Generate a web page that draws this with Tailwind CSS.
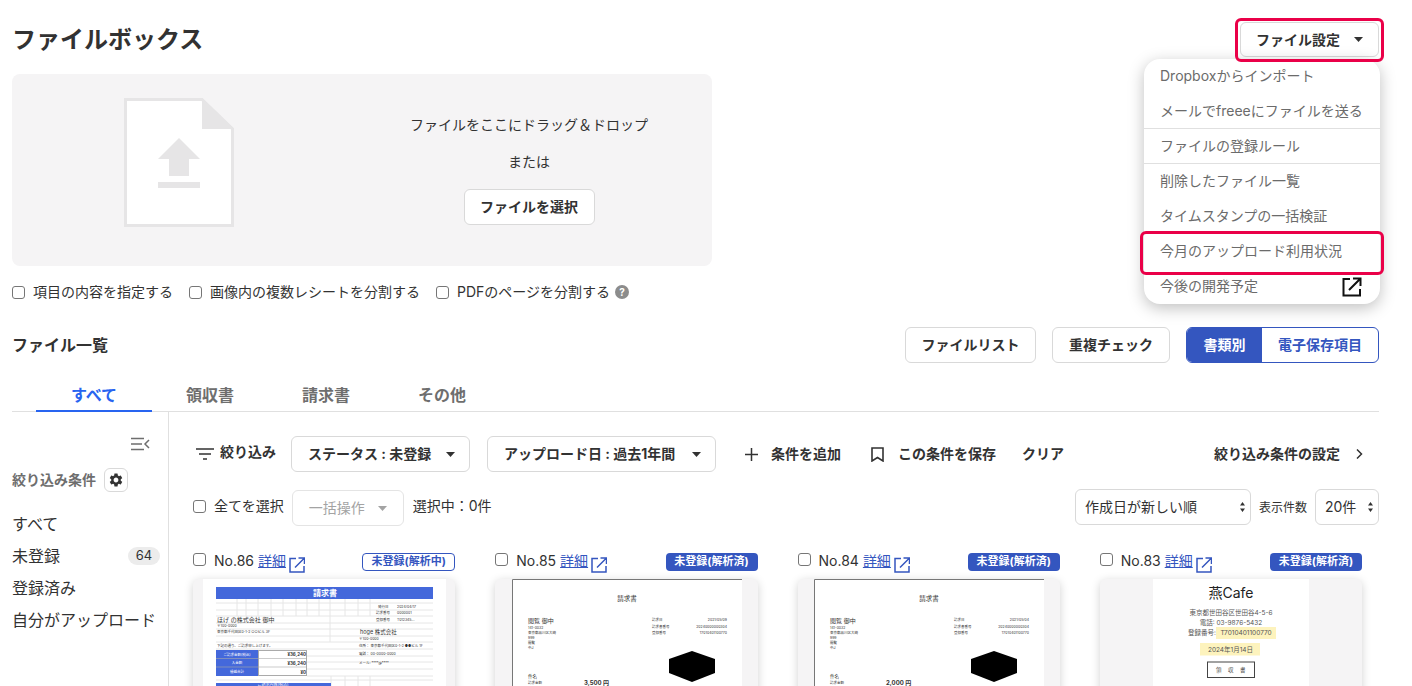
<!DOCTYPE html>
<html lang="ja">
<head>
    <meta charset="UTF-8">
    <title>ファイルボックス</title>
    <script src="https://cdn.jsdelivr.net/npm/@tailwindcss/browser@4"></script>
</head>
<body class="bg-white text-[#323232] font-[Inter,'Noto_Sans_CJK_JP',sans-serif] text-sm">
<div class="relative h-[686px] w-[1412px] overflow-hidden pl-3 pr-[33px] pt-[22px]">

    <!-- title -->
    <div class="flex h-[35px] items-center justify-between">
        <h1 class="text-2xl font-bold">ファイルボックス</h1>
        <button class="flex h-[35px] w-[139px] items-center justify-between rounded-md border border-[#d9d9d9] bg-white pl-[15px] pr-[15px] font-bold">
            ファイル設定
            <svg class="h-[5px] w-[9px]" viewBox="0 0 9 5"><path d="M0 0h9L4.500 5z" fill="#323232"/></svg>
        </button>
    </div>

    <!-- drop zone -->
    <div class="mt-[17px] flex h-[192px] w-[700px] rounded-lg bg-[#f5f4f5]">
        <div class="w-[112px]"></div>
        <svg class="mt-6 h-[129px] w-[110px]" viewBox="0 0 110 129">
            <path d="M1.500 1.500H78L108.500 31V127.500H1.500z" fill="#fff" stroke="#e6e5e6" stroke-width="3"/>
            <path d="M78 0V31H110z" fill="#e6e5e6"/>
            <path d="M55 40L76 61H65V78H45V61H34zM34 84H76V90H34z" fill="#e6e5e6"/>
        </svg>
        <div class="ml-[165px] flex w-[260px] flex-col items-center pt-[41px]">
            <p class="h-5 whitespace-nowrap leading-5">ファイルをここにドラッグ＆ドロップ</p>
            <p class="mt-[17px] h-5 leading-5">または</p>
            <button class="mt-[17px] h-[36px] w-[131px] rounded-md border border-[#d9d9d9] bg-white font-bold">ファイルを選択</button>
        </div>
    </div>

    <!-- upload options -->
    <div class="mt-[14px] flex h-[24px] items-center">
        <input type="checkbox" class="h-[13px] w-[13px] appearance-none rounded-[3px] border border-[#767676] bg-white">
        <span class="ml-2">項目の内容を指定する</span>
        <input type="checkbox" class="ml-[16px] h-[13px] w-[13px] appearance-none rounded-[3px] border border-[#767676] bg-white">
        <span class="ml-2">画像内の複数レシートを分割する</span>
        <input type="checkbox" class="ml-[16px] h-[13px] w-[13px] appearance-none rounded-[3px] border border-[#767676] bg-white">
        <span class="ml-2">PDFのページを分割する</span>
        <svg class="ml-[5px] h-[14px] w-[14px]" viewBox="0 0 14 14"><circle cx="7" cy="7" r="7" fill="#8c8c8c"/><text x="7" y="10.500" text-anchor="middle" font-size="10" font-weight="700" fill="#fff">?</text></svg>
    </div>

    <!-- list header -->
    <div class="mt-[23px] flex h-[36px] items-center">
        <h2 class="text-base font-bold">ファイル一覧</h2>
        <div class="ml-auto flex gap-4">
            <button class="h-[36px] w-[131px] rounded-md border border-[#d9d9d9] bg-white font-bold">ファイルリスト</button>
            <button class="h-[36px] w-[118px] rounded-md border border-[#d9d9d9] bg-white font-bold">重複チェック</button>
            <div class="flex h-[36px] w-[193px] overflow-hidden rounded-md border border-[#3456bf] font-bold">
                <span class="flex w-[75px] items-center justify-center bg-[#3456bf] text-white">書類別</span>
                <span class="flex flex-1 items-center justify-center text-[#3456bf]">電子保存項目</span>
            </div>
        </div>
    </div>

    <!-- tabs -->
    <div class="flex h-[49px] border-b border-[#e0e0e0] pl-6 text-base font-bold text-[#6e6e6e]">
        <span class="-mb-px flex w-[116px] items-center justify-center border-b-2 border-[#2864f0] pt-[16px] text-[#2864f0]">すべて</span>
        <span class="flex w-[116px] items-center justify-center pt-[15px]">領収書</span>
        <span class="flex w-[116px] items-center justify-center pt-[15px]">請求書</span>
        <span class="flex w-[116px] items-center justify-center pt-[15px]">その他</span>
    </div>

    <div class="flex">
        <!-- sidebar -->
        <aside class="h-[280px] w-[157px] shrink-0 border-r border-[#e0e0e0] pr-2">
            <div class="flex justify-end pr-[10px] pt-[25px]">
                <svg class="h-[14px] w-[19px]" viewBox="0 0 19 14" fill="none" stroke="#6e6e6e" stroke-width="1.500"><path d="M0 1.500H13M0 7H11M0 12.500H13M18 3L14 7L18 11"/></svg>
            </div>
            <div class="mt-[17px] flex h-6 items-center">
                <span class="font-bold text-[#6e6e6e]">絞り込み条件</span>
                <span class="ml-2 flex h-6 w-6 items-center justify-center rounded-md border border-[#d9d9d9]">
                    <svg class="h-[16px] w-[16px]" viewBox="0 0 24 24"><path fill="#323232" d="M19.140 12.940c.04-.3.06-.61.06-.94 0-.32-.02-.64-.07-.94l2.030-1.580a.49.49 0 0 0 .12-.61l-1.920-3.320a.488.488 0 0 0-.59-.22l-2.390.96c-.5-.38-1.030-.7-1.620-.94l-.36-2.540a.484.484 0 0 0-.48-.41h-3.840c-.24 0-.43.17-.47.41l-.36 2.540c-.59.24-1.130.57-1.620.94l-2.390-.96c-.22-.08-.47 0-.59.22L2.740 8.870c-.12.21-.08.47.12.61l2.030 1.580c-.05.3-.09.63-.09.94s.02.64.07.94l-2.030 1.580a.49.49 0 0 0-.12.61l1.920 3.320c.12.22.37.29.59.22l2.390-.96c.5.38 1.030.7 1.620.94l.36 2.540c.05.24.24.41.48.41h3.840c.24 0 .44-.17.47-.41l.36-2.540c.59-.24 1.130-.56 1.620-.94l2.390.96c.22.08.47 0 .59-.22l1.920-3.320c.12-.22.07-.47-.12-.61l-2.010-1.580zM12 15.600c-1.980 0-3.600-1.620-3.600-3.600s1.620-3.600 3.600-3.600 3.600 1.620 3.600 3.600-1.620 3.600-3.600 3.600z"/></svg>
                </span>
            </div>
            <ul class="mt-4 text-base">
                <li class="flex h-8 items-center">すべて</li>
                <li class="flex h-8 items-center justify-between">未登録<span class="flex h-[18px] w-8 items-center justify-center rounded-full bg-[#ececec] text-[13px]">64</span></li>
                <li class="flex h-8 items-center">登録済み</li>
                <li class="flex h-8 items-center">自分がアップロード</li>
            </ul>
        </aside>

        <!-- main -->
        <main class="min-w-0 flex-1 pl-6 pt-6">
            <div class="flex h-9 items-center font-bold">
                <svg class="ml-[3px] h-[12px] w-[18px]" viewBox="0 0 18 12" fill="none" stroke="#323232" stroke-width="1.700"><path d="M0 1H18M3 6H15M7 11H11"/></svg>
                <span class="ml-[6px] -translate-y-[2px]">絞り込み</span>
                <span class="ml-[15px] flex h-9 w-[179px] items-center justify-between rounded-md border border-[#d9d9d9] pl-4 pr-[14px]">ステータス : 未登録
                    <svg class="h-[5px] w-[9px]" viewBox="0 0 9 5"><path d="M0 0h9L4.500 5z" fill="#323232"/></svg>
                </span>
                <span class="ml-[17px] flex h-9 w-[229px] items-center justify-between rounded-md border border-[#d9d9d9] pl-4 pr-[14px]">アップロード日 : 過去1年間
                    <svg class="h-[5px] w-[9px]" viewBox="0 0 9 5"><path d="M0 0h9L4.500 5z" fill="#323232"/></svg>
                </span>
                <svg class="ml-[29px] h-[13px] w-[13px]" viewBox="0 0 13 13" fill="none" stroke="#323232" stroke-width="1.500"><path d="M6.500 0V13M0 6.500H13"/></svg>
                <span class="ml-[13px]">条件を追加</span>
                <svg class="ml-[30px] h-[15px] w-[13px]" viewBox="0 0 13 15" fill="none" stroke="#323232" stroke-width="1.600"><path d="M1 1H12V14L6.500 10.500L1 14z"/></svg>
                <span class="ml-[14px]">この条件を保存</span>
                <span class="ml-[26px]">クリア</span>
                <span class="ml-auto">絞り込み条件の設定</span>
                <svg class="ml-[16px] mr-4 h-[10px] w-[7px]" viewBox="0 0 7 10" fill="none" stroke="#323232" stroke-width="1.500"><path d="M1 .5L5.500 5L1 9.500"/></svg>
            </div>

            <div class="mt-[18px] flex h-9 items-center">
                <input type="checkbox" class="-mt-[3px] h-[13px] w-[13px] appearance-none rounded-[3px] border border-[#767676] bg-white">
                <span class="ml-2 -translate-y-[2px]">全てを選択</span>
                <span class="ml-2 flex h-9 w-[112px] items-center justify-between rounded-md border border-[#e4e4e4] pl-4 pr-4 text-[#a3a3a3]">一括操作
                    <svg class="h-[5px] w-[9px]" viewBox="0 0 9 5"><path d="M0 0h9L4.500 5z" fill="#a3a3a3"/></svg>
                </span>
                <span class="ml-[9px] -translate-y-[2px]">選択中：0件</span>
                <span class="ml-auto flex h-9 w-[176px] -translate-y-[1px] items-center justify-between rounded-md border border-[#d9d9d9] pl-[9px] pr-[5px]">作成日が新しい順
                    <svg class="h-[10px] w-[5px]" viewBox="0 0 5 10"><path d="M2.500 0L5 3.500H0zM2.500 10L0 6.500H5z" fill="#323232"/></svg>
                </span>
                <span class="ml-2 text-xs">表示件数</span>
                <span class="ml-2 flex h-9 w-[64px] -translate-y-[1px] items-center justify-between rounded-md border border-[#d9d9d9] pl-[9px] pr-[5px]">20件
                    <svg class="h-[10px] w-[5px]" viewBox="0 0 5 10"><path d="M2.500 0L5 3.500H0zM2.500 10L0 6.500H5z" fill="#323232"/></svg>
                </span>
            </div>

            <!-- cards -->
            <div class="mt-[27px] grid w-[1169px] grid-cols-4 gap-x-[40px]">

                <div>
                    <div class="flex h-[26px] items-start">
                        <input type="checkbox" class="h-[13px] w-[13px] appearance-none rounded-[3px] border border-[#767676] bg-white">
                        <span class="ml-2 leading-[15px]">No.86</span>
                        <a class="ml-[4px] text-[#3456bf] underline leading-[15px]">詳細</a>
                        <svg class="ml-[3px] mt-[4px] h-4 w-4" viewBox="0 0 16 16" fill="none" stroke="#3456bf" stroke-width="1.500"><path d="M7 1.500H1V15H15V9M6 10.500L15 1.500M9.500 1H15.500V7"/></svg>
                        <span class="ml-auto flex h-[18px] w-[93px] items-center justify-center rounded-[4px] border border-[#3456bf] text-[11px] font-bold text-[#3456bf]">未登録(解析中)</span>
                    </div>
                    <div class="flex h-[130px] justify-center rounded-md bg-[#f5f4f5] shadow-[0_2px_10px_rgba(0,0,0,0.18)]">
                        <svg class="h-[130px] w-[243px] bg-white" viewBox="0 0 243 130">
                            <g stroke="#e6e6e6" stroke-width="1">
                                <path d="M13 24H230M13 31H230M13 37H230M13 44H230M13 50H230M13 57H230M13 63H230M13 70H230M104 77H230M104 83H230M104 90H230M104 97H230M13 101H230"/>
                                <path d="M34 20V37M43 20V37M55 20V37M68 20V37M80 20V37M93 20V37M104 20V37M116 20V37M127 20V63M142 20V37M155 20V37M167 20V37M128 97V130M142 97V130M155 97V130M167 97V130"/>
                            </g>
                            <rect x="13" y="8" width="217" height="12" fill="#4468db"/>
                            <text x="122" y="17" text-anchor="middle" font-size="8" font-weight="700" fill="#fff">請求書</text>
                            <g font-size="3.500" fill="#333">
                                <text x="175" y="28.500">発行日</text><text x="194" y="28.500">2024/04/17</text>
                                <text x="173" y="35">請求番号</text><text x="194" y="35">0000001</text>
                                <text x="173" y="41.500">登録番号</text><text x="194" y="41.500">T012345...</text>
                                <text x="14" y="47.500">〒100-0000</text>
                                <text x="14" y="54">東京都千代田区0-1-2 ○○ビル 3F</text>
                                <text x="14" y="67.500">下記の通り、ご請求申し上げます。</text>
                                <text x="156" y="61">〒100-0000</text>
                                <text x="156" y="67.500">住所： 東京都千代田区0-1-2 ●●ビル 1F</text>
                                <text x="156" y="76">電話： 00-0000-0000</text>
                                <text x="156" y="85">メール: ****@****</text>
                            </g>
                            <text x="14" y="43" font-size="6" fill="#333">ほげ の株式会社 御中</text>
                            <text x="157" y="55" font-size="5.500" fill="#333">hoge 株式会社</text>
                            <rect x="13" y="71" width="42" height="26" fill="#4468db"/>
                            <rect x="55.500" y="71.500" width="48" height="25" fill="#fff" stroke="#aaa"/>
                            <path d="M13 79.500H104M13 88H104" stroke="#aaa" stroke-width=".6"/>
                            <g font-size="3.500" fill="#fff" text-anchor="middle">
                                <text x="34" y="76.500">ご請求金額(税込)</text><text x="34" y="85">入金額</text><text x="34" y="94">繰越合計</text>
                            </g>
                            <g font-size="4.500" font-weight="700" fill="#333" text-anchor="end">
                                <text x="103" y="77">¥36,240</text><text x="103" y="86">¥36,240</text><text x="103" y="94.500">¥0</text>
                            </g>
                            <rect x="13" y="104" width="115" height="8" fill="#4468db"/>
                            <text x="70" y="107" text-anchor="middle" font-size="4" fill="#fff">ご請求内容(税込)</text>
                        </svg>
                    </div>
                </div>

                <div>
                    <div class="flex h-[26px] items-start">
                        <input type="checkbox" class="h-[13px] w-[13px] appearance-none rounded-[3px] border border-[#767676] bg-white">
                        <span class="ml-2 leading-[15px]">No.85</span>
                        <a class="ml-[4px] text-[#3456bf] underline leading-[15px]">詳細</a>
                        <svg class="ml-[3px] mt-[4px] h-4 w-4" viewBox="0 0 16 16" fill="none" stroke="#3456bf" stroke-width="1.500"><path d="M7 1.500H1V15H15V9M6 10.500L15 1.500M9.500 1H15.500V7"/></svg>
                        <span class="ml-auto flex h-[18px] w-[92px] items-center justify-center rounded-[4px] bg-[#3456bf] text-[11px] font-bold text-white">未登録(解析済)</span>
                    </div>
                    <div class="flex h-[130px] justify-center rounded-md bg-[#f5f4f5] shadow-[0_2px_10px_rgba(0,0,0,0.18)]">
                        <svg class="ml-[1px] h-[130px] w-[230px] bg-white" viewBox="0 0 230 130">
                            <path d="M.5 130V.5H230" fill="none" stroke="#777"/>
                            <text x="115" y="22" text-anchor="middle" font-size="6.500" fill="#333">請求書</text>
                            <text x="16" y="44" font-size="6" fill="#333">閲覧 御中</text>
                            <g font-size="3.500" fill="#333">
                                <text x="16" y="49.500">141-0032</text><text x="16" y="54.500">東京都品川区大崎</text><text x="16" y="59.500">999</text><text x="16" y="64.500">閲覧</text><text x="16" y="69.500">中J</text>
                                <text x="140" y="42">請求日</text><text x="140" y="48.500">請求書番号</text><text x="140" y="55">登録番号</text>
                                <text x="16" y="105">請求金額</text>
                            </g>
                            <g font-size="3.500" fill="#333" text-anchor="end">
                                <text x="215" y="42">2021/05/09</text><text x="215" y="48.500">20240000000304</text><text x="215" y="55">T7010401100770</text>
                            </g>
                            <path d="M180 72L203 80V94L180 103L157 94V80z" fill="#000"/>
                            <text x="16" y="99" font-size="4.500" fill="#333">件名</text>
                            <text x="72" y="105.500" font-size="6" font-weight="700" fill="#333">3,500 円</text>
                        </svg>
                    </div>
                </div>

                <div>
                    <div class="flex h-[26px] items-start">
                        <input type="checkbox" class="h-[13px] w-[13px] appearance-none rounded-[3px] border border-[#767676] bg-white">
                        <span class="ml-2 leading-[15px]">No.84</span>
                        <a class="ml-[4px] text-[#3456bf] underline leading-[15px]">詳細</a>
                        <svg class="ml-[3px] mt-[4px] h-4 w-4" viewBox="0 0 16 16" fill="none" stroke="#3456bf" stroke-width="1.500"><path d="M7 1.500H1V15H15V9M6 10.500L15 1.500M9.500 1H15.500V7"/></svg>
                        <span class="ml-auto flex h-[18px] w-[92px] items-center justify-center rounded-[4px] bg-[#3456bf] text-[11px] font-bold text-white">未登録(解析済)</span>
                    </div>
                    <div class="flex h-[130px] justify-center rounded-md bg-[#f5f4f5] shadow-[0_2px_10px_rgba(0,0,0,0.18)]">
                        <svg class="ml-[1px] h-[130px] w-[230px] bg-white" viewBox="0 0 230 130">
                            <path d="M.5 130V.5H230" fill="none" stroke="#777"/>
                            <text x="115" y="22" text-anchor="middle" font-size="6.500" fill="#333">請求書</text>
                            <text x="16" y="44" font-size="6" fill="#333">閲覧 御中</text>
                            <g font-size="3.500" fill="#333">
                                <text x="16" y="49.500">141-0032</text><text x="16" y="54.500">東京都品川区大崎</text><text x="16" y="59.500">999</text><text x="16" y="64.500">閲覧</text><text x="16" y="69.500">中J</text>
                                <text x="140" y="42">請求日</text><text x="140" y="48.500">請求書番号</text><text x="140" y="55">登録番号</text>
                                <text x="16" y="105">請求金額</text>
                            </g>
                            <g font-size="3.500" fill="#333" text-anchor="end">
                                <text x="215" y="42">2021/05/04</text><text x="215" y="48.500">20240000000304</text><text x="215" y="55">T7010401100770</text>
                            </g>
                            <path d="M180 72L203 80V94L180 103L157 94V80z" fill="#000"/>
                            <text x="16" y="99" font-size="4.500" fill="#333">件名</text>
                            <text x="72" y="105.500" font-size="6" font-weight="700" fill="#333">2,000 円</text>
                        </svg>
                    </div>
                </div>

                <div>
                    <div class="flex h-[26px] items-start">
                        <input type="checkbox" class="h-[13px] w-[13px] appearance-none rounded-[3px] border border-[#767676] bg-white">
                        <span class="ml-2 leading-[15px]">No.83</span>
                        <a class="ml-[4px] text-[#3456bf] underline leading-[15px]">詳細</a>
                        <svg class="ml-[3px] mt-[4px] h-4 w-4" viewBox="0 0 16 16" fill="none" stroke="#3456bf" stroke-width="1.500"><path d="M7 1.500H1V15H15V9M6 10.500L15 1.500M9.500 1H15.500V7"/></svg>
                        <span class="ml-auto flex h-[18px] w-[92px] items-center justify-center rounded-[4px] bg-[#3456bf] text-[11px] font-bold text-white">未登録(解析済)</span>
                    </div>
                    <div class="flex h-[130px] justify-center rounded-md bg-[#f5f4f5] shadow-[0_2px_10px_rgba(0,0,0,0.18)]">
                        <svg class="h-[130px] w-[156px] bg-white" viewBox="0 0 156 130">
                            <text x="78" y="19" text-anchor="middle" font-size="14" fill="#222">燕Cafe</text>
                            <rect x="63" y="48" width="60" height="12" fill="#fdf3bd"/>
                            <rect x="47" y="64" width="60" height="12.500" fill="#fdf3bd"/>
                            <g font-size="6.500" fill="#555">
                                <text x="78" y="35.500" text-anchor="middle">東京都世田谷区世田谷4-5-6</text>
                                <text x="78" y="45.500" text-anchor="middle">電話: 03-9876-5432</text>
                                <text x="35" y="55.500">登録番号:</text>
                                <text x="93" y="56" text-anchor="middle">T7010401100770</text>
                                <text x="77.500" y="72.500" text-anchor="middle">2024年1月14日</text>
                            </g>
                            <rect x="54.500" y="83" width="47" height="15.500" fill="none" stroke="#444"/>
                            <text x="81" y="93" text-anchor="middle" font-size="5.500" fill="#555" letter-spacing="6.500">領収書</text>
                        </svg>
                    </div>
                </div>

            </div>
        </main>
    </div>

    <!-- settings dropdown -->
    <div class="absolute left-[1144px] top-[59px] w-[236px] rounded-2xl bg-white text-[#6b6b6b] shadow-[0_4px_16px_rgba(0,0,0,0.25)]">
        <div class="flex h-[35px] items-center px-4 pb-px">Dropboxからインポート</div>
        <div class="flex h-[35px] items-center border-b border-[#e0e0e0] px-4">メールでfreeeにファイルを送る</div>
        <div class="flex h-[35px] items-center border-b border-[#e0e0e0] px-4">ファイルの登録ルール</div>
        <div class="flex h-[35px] items-center px-4 pb-[2px]">削除したファイル一覧</div>
        <div class="flex h-[35px] items-center px-4 pb-[2px]">タイムスタンプの一括検証</div>
        <div class="flex h-[35px] items-center px-4 pb-[2px]">今月のアップロード利用状況</div>
        <div class="flex h-[35px] items-center justify-between px-4 pr-[18px]"><span class="-translate-y-px">今後の開発予定</span>
            <svg class="h-5 w-5" viewBox="0 0 20 20" fill="none" stroke="#111" stroke-width="2"><path d="M8 2H1.500V18.500H18V12M7 13L18 2M11 1.500H18.500V9"/></svg>
        </div>
    </div>

    <!-- highlight frames -->
    <div class="absolute left-[1235px] top-[18px] h-[44px] w-[149px] rounded-md border-[3px] border-[#ea0048]"></div>
    <div class="absolute left-[1140px] top-[231px] h-[44px] w-[244px] rounded-md border-[3px] border-[#ea0048]"></div>
</div>
</body>
</html>
